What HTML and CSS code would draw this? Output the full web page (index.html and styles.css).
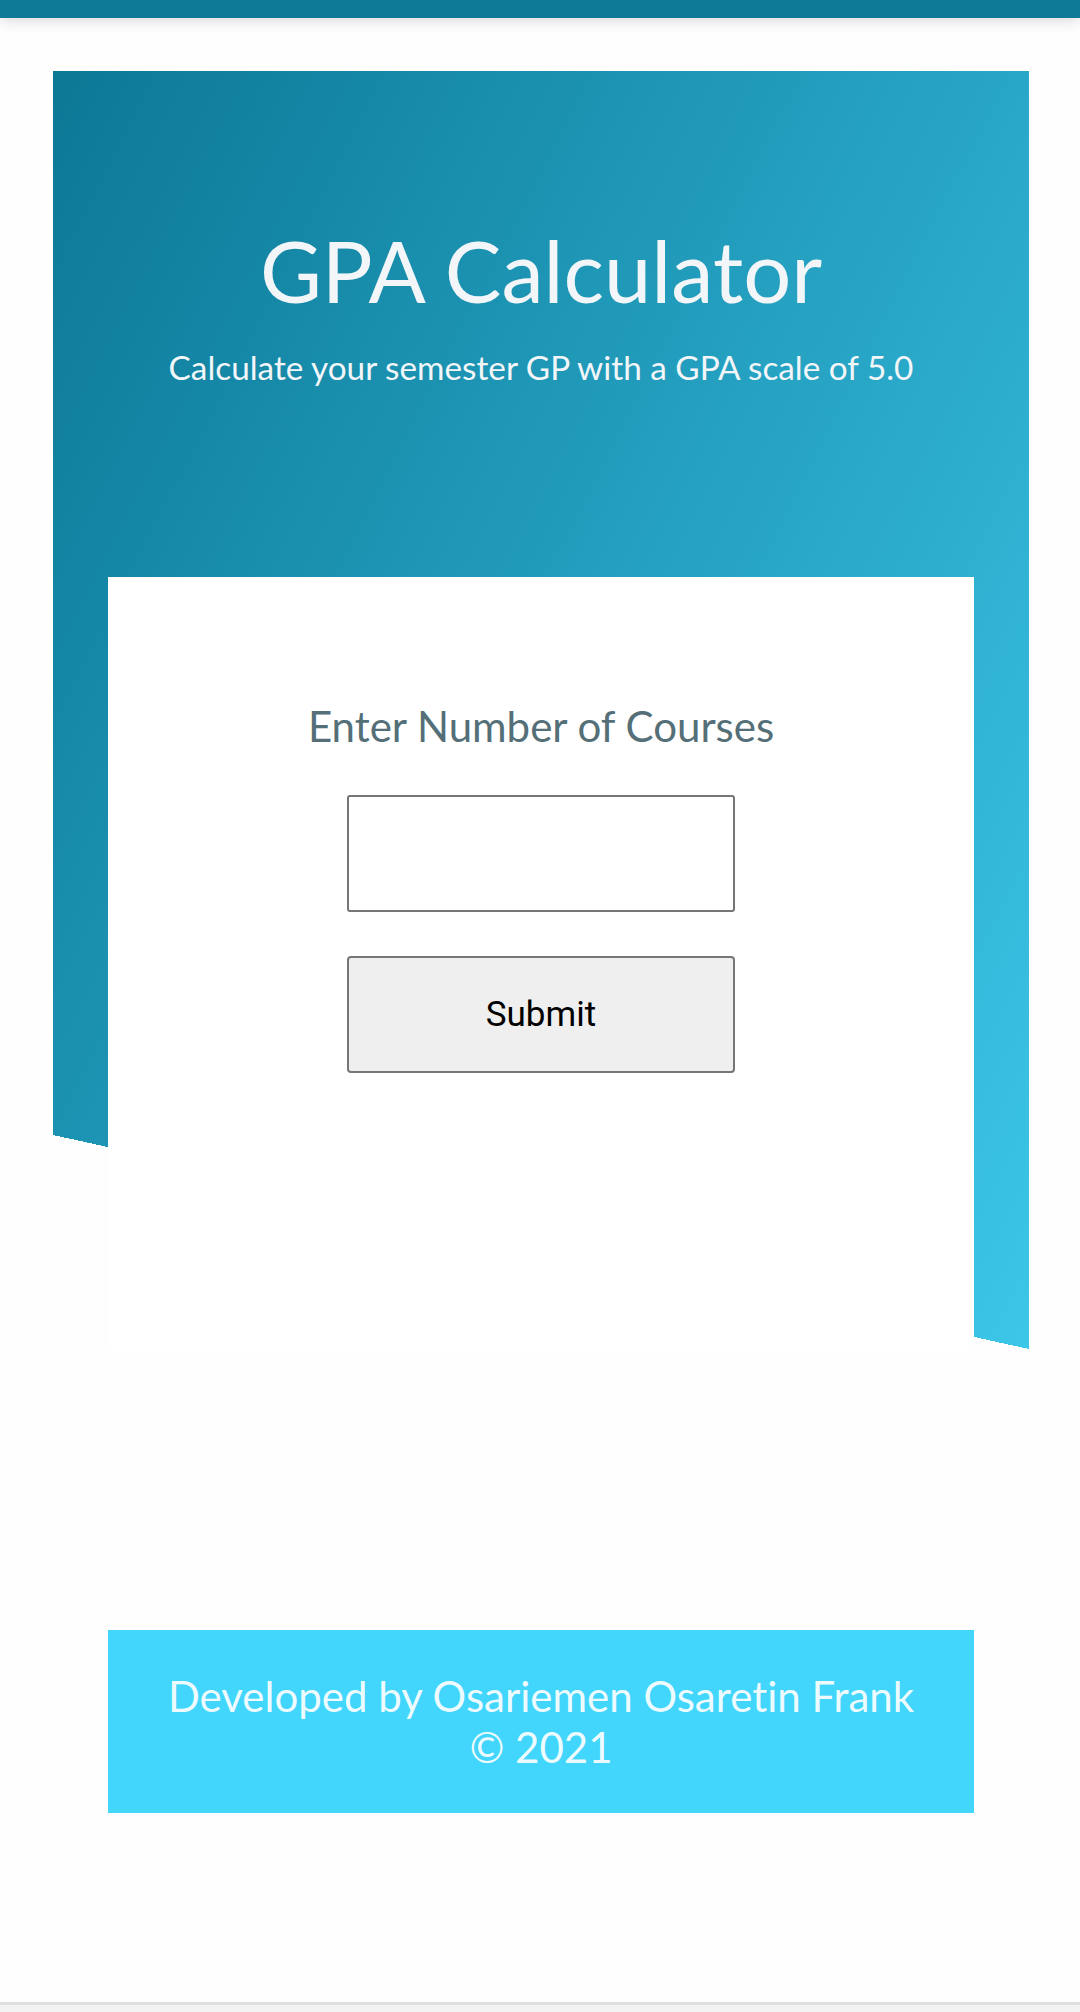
FILE: index.html
```html
<!DOCTYPE html>
<html lang="en">
<head>
<meta charset="utf-8">
<title>GPA Calculator</title>
<link rel="stylesheet" href="styles.css">
</head>
<body>
<div class="topbar"></div>
<main class="main">
  <section class="panel">
    <header class="hero">
      <h1 class="title">GPA Calculator</h1>
      <p class="subtitle">Calculate your semester GP with a GPA scale of 5.0</p>
    </header>
    <div class="card">
      <h2 class="label">Enter Number of Courses</h2>
      <input class="field" type="text">
      <button class="submit" type="button">Submit</button>
    </div>
  </section>
  <footer class="footer">
    <span class="footer-line">Developed by Osariemen Osaretin Frank</span>
    <span class="footer-line">© 2021</span>
  </footer>
</main>
<div class="bottombar"></div>
</body>
</html>
```

FILE: styles.css
```css
* { box-sizing: border-box; }

html, body {
  margin: 0;
  padding: 0;
  background: #fefefe;
}

body {
  width: 1080px;
  height: 2012px;
  overflow: hidden;
  display: flex;
  flex-direction: column;
  font-family: Lato, "Open Sans", sans-serif;
  font-variant-ligatures: none;
}

.topbar {
  height: 18px;
  flex: none;
  background: #0e7a98;
  box-shadow: 0 3px 14px rgba(0, 0, 0, 0.14);
  position: relative;
  z-index: 2;
}

.main {
  flex: 1;
  display: flex;
  flex-direction: column;
  padding-top: 53px;
}

.panel {
  margin-left: 53px;
  width: 976px;
  height: 1278px;
  padding: 0 55px;
  display: flex;
  flex-direction: column;
  background:
    linear-gradient(to bottom left, rgba(254, 254, 254, 0) 50%, #fefefe 50%) left bottom / 100% 214px no-repeat,
    linear-gradient(117deg, #0c7896 0%, #3cc6e8 100%);
}

.hero {
  height: 506px;
  flex: none;
  padding-top: 149px;
  text-align: center;
  color: #f2f6f9;
}

.title {
  margin: 0;
  font-size: 84.8px;
  line-height: 1.2;
  font-weight: 400;
}

.subtitle {
  margin: 26px 0 0;
  font-size: 33.3px;
  line-height: 1.2;
  font-weight: 400;
}

.card {
  flex: 1;
  background: #ffffff;
  display: flex;
  flex-direction: column;
  align-items: center;
  padding-top: 124px;
}

.label {
  margin: 0;
  font-size: 42px;
  line-height: 1.2;
  font-weight: 400;
  color: #546f78;
}

.field {
  margin-top: 44px;
  width: 388px;
  height: 117px;
  border: 2.5px solid #767676;
  border-radius: 3px;
  background: #fff;
  font-family: Roboto, sans-serif;
  font-size: 35px;
}

.submit {
  margin-top: 44px;
  width: 388px;
  height: 117px;
  border: 2.5px solid #767676;
  border-radius: 4px;
  background: #efefef;
  color: #000;
  font-family: Roboto, sans-serif;
  font-size: 35px;
  padding: 0;
}

.footer {
  margin: 281px 0 0 108px;
  width: 866px;
  height: 183px;
  background: #42d6fc;
  color: rgba(255, 255, 255, 0.92);
  display: flex;
  flex-direction: column;
  align-items: center;
  justify-content: center;
  font-size: 42px;
  line-height: 1.2;
}

.footer-line { display: block; }

.bottombar {
  margin-top: auto;
  height: 10px;
  flex: none;
  background: #f3f3f3;
  border-top: 3px solid #dfe0df;
}
```
